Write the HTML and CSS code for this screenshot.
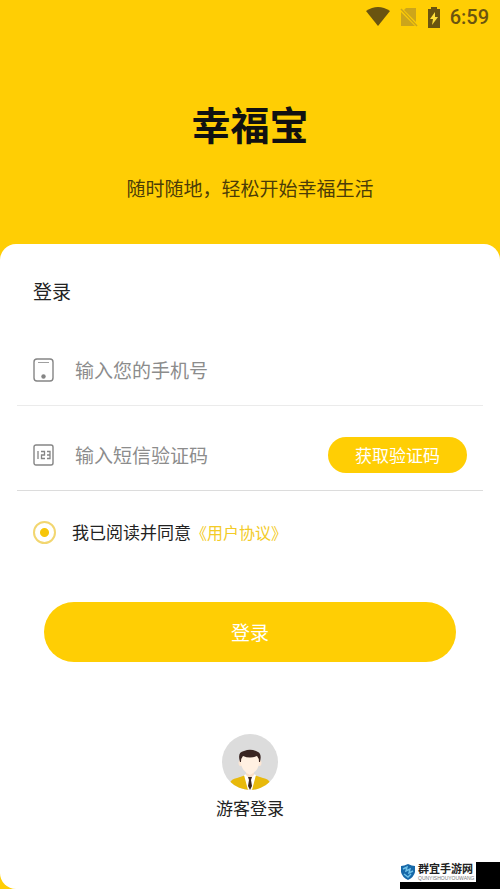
FILE: index.html
```html
<!DOCTYPE html>
<html lang="zh-CN">
<head>
<meta charset="utf-8">
<meta name="viewport" content="width=device-width, initial-scale=1">
<title>幸福宝</title>
<link rel="stylesheet" href="styles.css">
</head>
<body>
<div class="status-bar">
  <svg class="status-icon" width="26" height="20" viewBox="0 0 26 20" aria-hidden="true"><path d="M1 4Q13-4 25 4L13 19Z" fill="#6a5410"/></svg>
  <svg class="status-icon" width="18" height="20" viewBox="0 0 18 20" aria-hidden="true"><path d="M6 1H16V15L4 3ZM1 5L15 19H1Z" fill="#cca51b"/><path d="M1 2L17 19" stroke="#cca51b" stroke-width="1.500"/></svg>
  <svg class="status-icon" width="14" height="21" viewBox="0 0 14 21" aria-hidden="true"><path d="M4 0H10V2H13V21H1V2H4Z" fill="#6a5410"/><path d="M8 5L3 12H6L5 18L11 10H8Z" fill="#ffdf3a"/></svg>
  <span class="clock">6:59</span>
</div>
<header class="hero">
  <h1 class="brand">幸福宝</h1>
  <p class="slogan">随时随地，轻松开始幸福生活</p>
</header>
<main class="card">
  <form class="login">
    <h2 class="title">登录</h2>
    <div class="field">
      <label class="field-icon" for="phone" aria-label="手机号">
        <svg width="22" height="24" viewBox="0 0 22 24" fill="none" stroke="#858585"><rect x="1" y="1" width="19" height="22" rx="3" stroke-width="1.400"/><path d="M5 4.500H16" stroke="#a0a0a0"/><circle cx="10.500" cy="18.500" r="2.200" fill="#858585" stroke="none"/></svg>
      </label>
      <input class="field-input" id="phone" type="tel" placeholder="输入您的手机号">
    </div>
    <div class="field field-code">
      <label class="field-icon" for="code" aria-label="短信验证码">
        <svg width="22" height="22" viewBox="0 0 22 22" fill="none" stroke="#858585"><rect x="1" y="1" width="19" height="20" rx="2" stroke-width="1.400"/><path d="M5 7V15M8 7.500H11.500V11H8.500V14.500H12M14 7.500H17V14.500H14M14 11H17" stroke-width="1.300"/></svg>
      </label>
      <input class="field-input" id="code" type="text" placeholder="输入短信验证码">
      <button class="send-code" type="button">获取验证码</button>
    </div>
    <div class="agreement">
      <input class="agree-radio" id="agree" type="radio" checked>
      <label for="agree">我已阅读并同意</label><a class="agree-link" href="#">《用户协议》</a>
    </div>
    <button class="submit" type="submit">登录</button>
  </form>
  <a class="guest" href="#">
    <svg width="56" height="56" viewBox="0 0 56 56" aria-hidden="true">
      <defs><clipPath id="disc"><circle cx="28" cy="28" r="28"/></clipPath></defs>
      <g clip-path="url(#disc)">
        <rect width="56" height="56" fill="#dcdcdc"/>
        <path d="M8 56V49Q9 45 15 44L24 41H32L41 44Q47 45 48 49V56Z" fill="#e8b90b"/>
        <path d="M22 41L28 39L34 41L30 56H26Z" fill="#fff"/>
        <path d="M24 34H32V41L28 45L24 41Z" fill="#f8dfc9"/>
        <ellipse cx="18.500" cy="29" rx="2" ry="3" fill="#fce7d5"/><ellipse cx="37.500" cy="29" rx="2" ry="3" fill="#fce7d5"/>
        <path d="M19 21H37V30Q36 37 28 41Q20 37 19 30Z" fill="#fff0e2"/>
        <path d="M18 28Q15 18 22 17Q29 14 36 18Q40 20 38 28H37Q37 24 35 22Q28 25 21 22Q19 24 19 28Z" fill="#382421"/>
        <path d="M26 43H30L29 46L30 52L28 56L26 52L27 46Z" fill="#382421"/>
      </g>
    </svg>
    <span>游客登录</span>
  </a>
</main>
<aside class="watermark">
  <div class="watermark-logo">
    <svg width="16" height="18" viewBox="0 0 16 18" aria-hidden="true"><path d="M8 1Q12 3 15 3V9Q14 14 8 17Q2 14 1 9V3Q4 3 8 1Z" fill="#1768a8"/><path d="M3 6L7 4L6 8L10 6L9 10L13 8M4 11L8 14L11 11" fill="none" stroke="#6fc1e8" stroke-width="1.400"/></svg>
    <div>
      <div class="watermark-name">群宜手游网</div>
      <div class="watermark-latin">QUNYISHOUYOUWANG</div>
    </div>
  </div>
</aside>
</body>
</html>
```
FILE: styles.css
```css
* {
  box-sizing: border-box;
}

body {
  position: relative;
  display: flex;
  flex-direction: column;
  min-height: 100vh;
  margin: 0;
  background: #ffce04;
  color: #222;
  font-family: "Noto Sans CJK SC", sans-serif;
  font-size: 17px;
  line-height: 24px;
}

button,
input {
  margin: 0;
  border: 0;
  padding: 0;
  font: inherit;
}

a {
  text-decoration: none;
}

.status-bar {
  display: flex;
  align-items: center;
  justify-content: flex-end;
  height: 34px;
  padding-right: 11px;
}

.status-icon {
  margin-right: 9px;
}

.clock {
  color: #6a5410;
  font-family: Roboto, sans-serif;
  font-size: 20px;
  font-weight: 500;
}

.hero {
  padding: 62px 16px 42px;
  text-align: center;
}

.brand {
  margin: 0 0 24px;
  color: #111;
  font-size: 39px;
  font-weight: 700;
  line-height: 54px;
}

.slogan {
  margin: 0;
  color: #4b3c08;
  font-size: 19px;
  line-height: 28px;
}

.card {
  flex: 1;
  padding: 33px 17px 24px;
  border-radius: 16px;
  background: #fff;
}

.title {
  margin: 0 0 16px;
  padding-left: 16px;
  font-size: 19px;
  font-weight: 400;
  line-height: 28px;
}

.field {
  display: flex;
  align-items: center;
  height: 85px;
  padding: 13px 16px 0;
  border-bottom: 1px solid #ebebeb;
}

.field-code {
  border-bottom-color: #dcdcdc;
}

.field-icon {
  display: flex;
  margin-right: 20px;
}

.field-input {
  flex: 1;
  min-width: 0;
  background: transparent;
  color: #222;
  font-size: 19px;
  line-height: 28px;
  outline: none;
}

.field-input::placeholder {
  color: #8c8c8c;
  opacity: 1;
}

.send-code {
  width: 139px;
  height: 36px;
  border-radius: 18px;
  background: #ffce04;
  color: #fff;
}

.agreement {
  display: flex;
  align-items: center;
  height: 28px;
  margin: 27px 16px 56px;
}

.agree-radio {
  appearance: none;
  width: 23px;
  height: 23px;
  margin-right: 16px;
  border: 2px solid #f2d670;
  border-radius: 50%;
  background: radial-gradient(circle, #f7c60a 4px, #fff 5px);
}

.agree-link {
  color: #f3cb27;
  font-size: 16px;
}

.submit {
  display: block;
  width: calc(100% - 54px);
  height: 60px;
  margin: 0 auto 72px;
  border-radius: 30px;
  background: #ffce04;
  color: #fff;
  font-size: 19px;
}

.guest {
  display: flex;
  flex-direction: column;
  align-items: center;
  gap: 6px;
  color: #222;
}

.watermark {
  position: absolute;
  right: 0;
  bottom: 0;
  padding: 0 24px 7px 0;
  background: #000;
}

.watermark-logo {
  display: flex;
  align-items: center;
  gap: 2px;
  width: 76px;
  height: 20px;
  background: #fff;
}

.watermark-name {
  font-size: 11px;
  font-weight: 700;
  line-height: 13px;
}

.watermark-latin {
  color: #777;
  font-family: "Liberation Sans", sans-serif;
  font-size: 5px;
  line-height: 7px;
}
```
